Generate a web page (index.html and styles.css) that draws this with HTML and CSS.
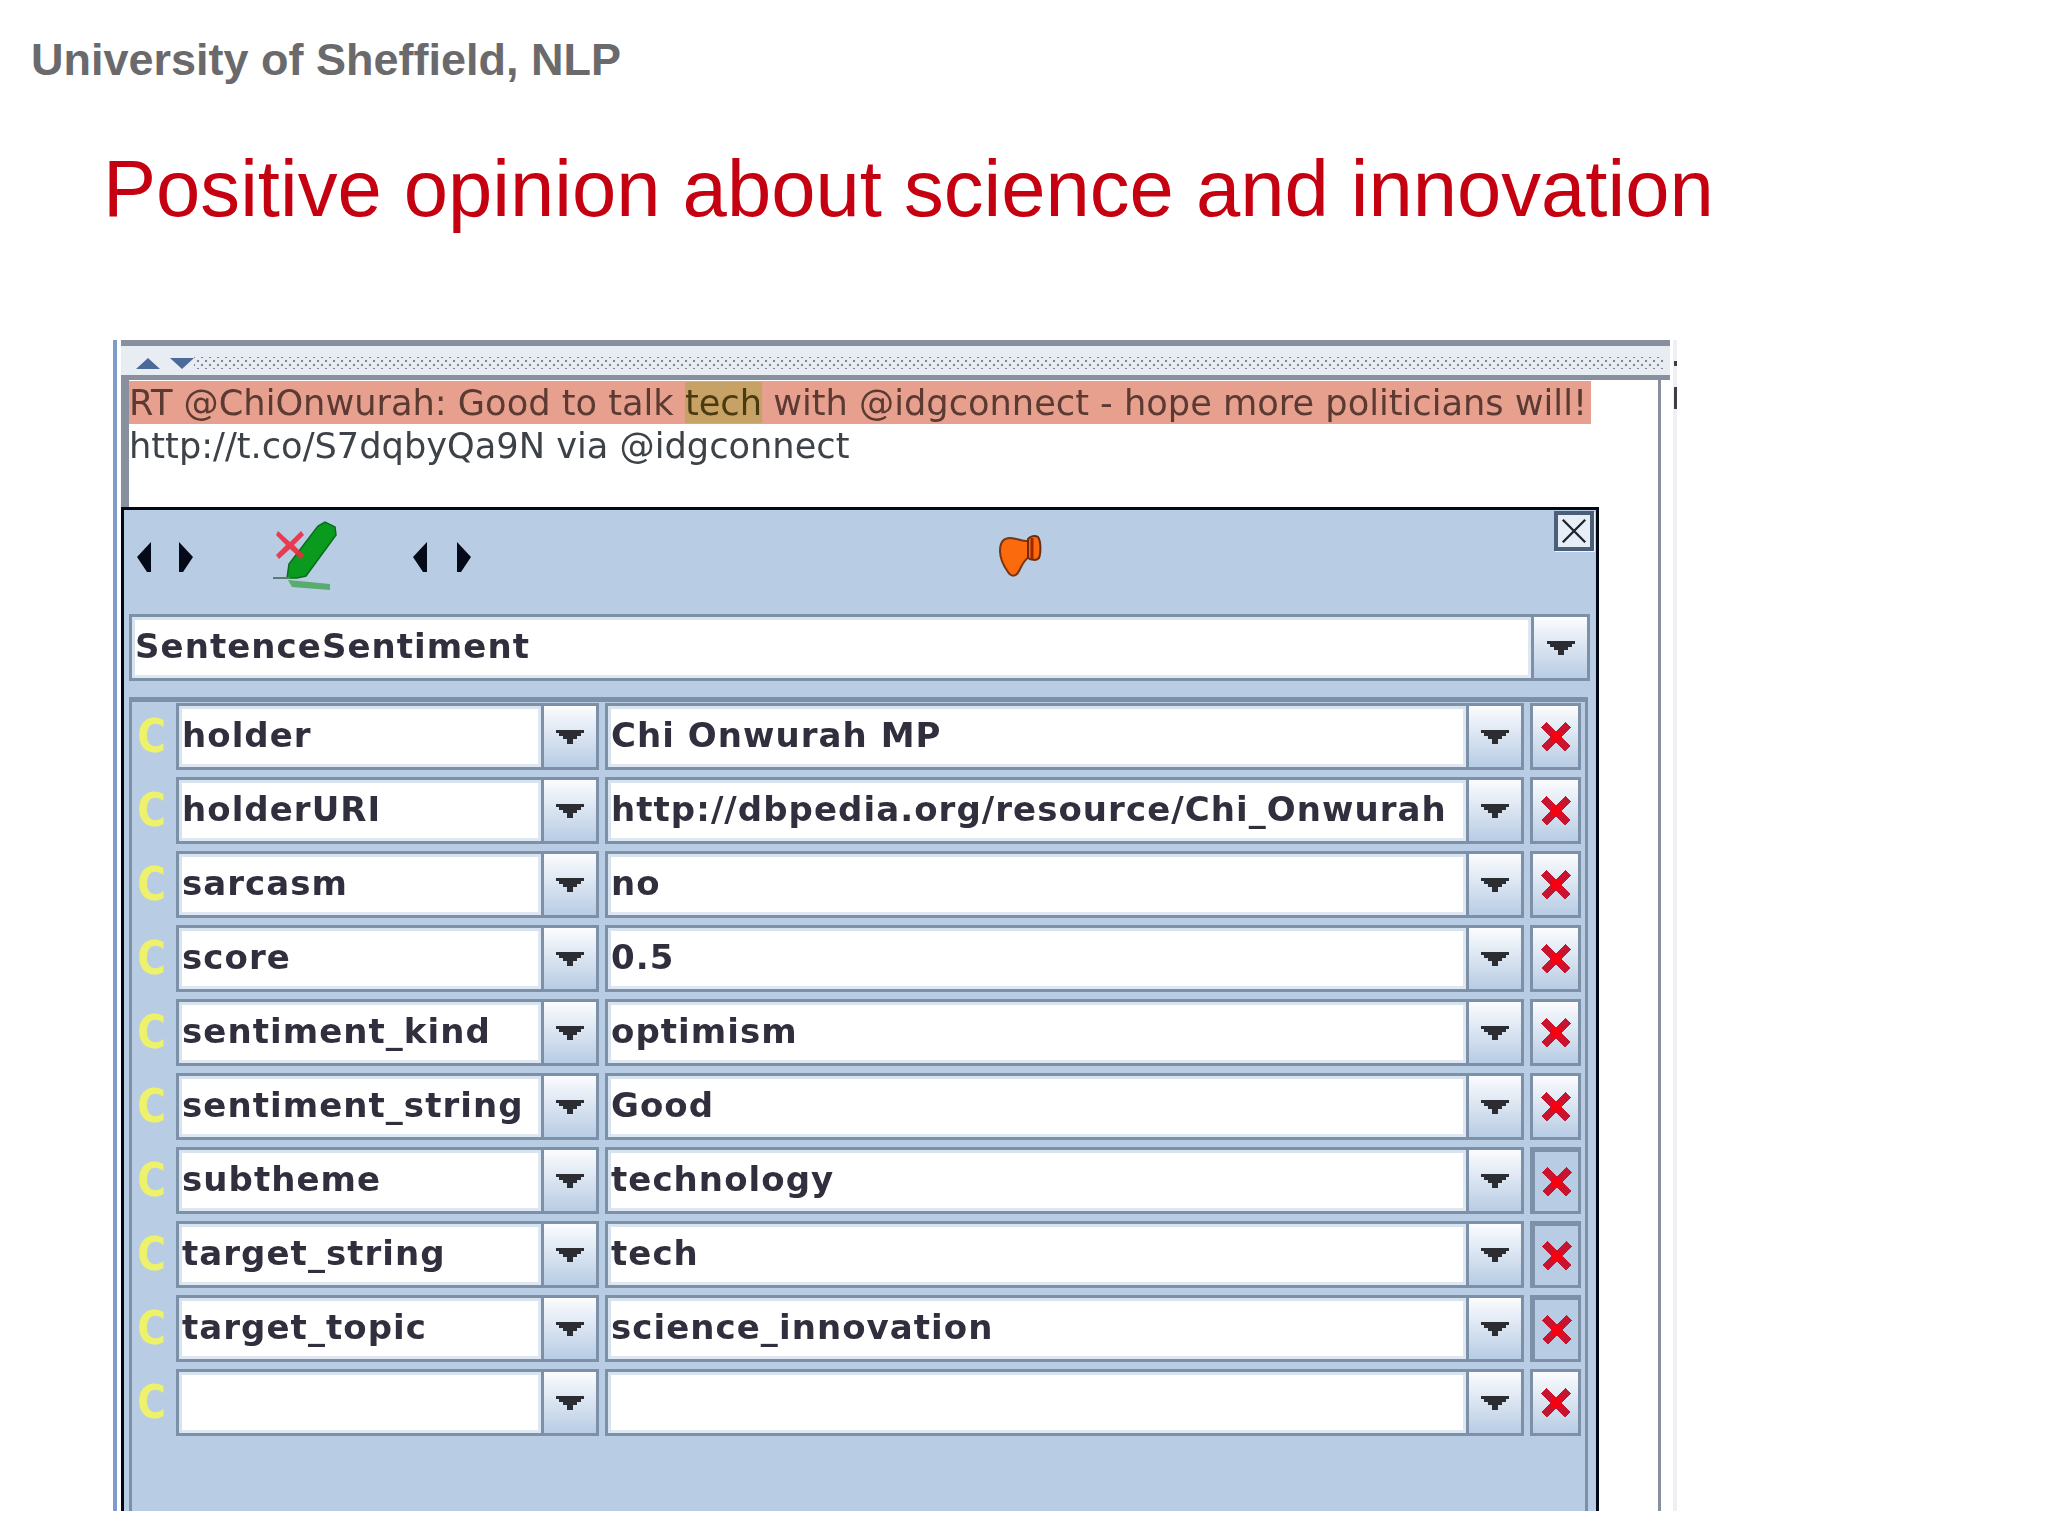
FILE: index.html
```html
<!DOCTYPE html>
<html lang="en">
<head>
<meta charset="utf-8">
<title>Positive opinion about science and innovation</title>
<link rel="stylesheet" href="styles.css">
</head>
<body>
<svg class="defs" width="0" height="0" aria-hidden="true">
  <symbol id="down" viewBox="0 0 28 14"><path d="M0 0H28V3H25V6H21V9H17V14H11V9H7V6H3V3H0Z" fill="#2b2d33"/></symbol>
  <symbol id="cross" viewBox="0 0 30 30"><path d="M3 3L27 27M27 3L3 27" stroke="#c8142e" stroke-width="7.5" fill="none" shape-rendering="crispEdges"/><rect x="10" y="10" width="10" height="10" fill="#f90010"/></symbol>
  <symbol id="left" viewBox="0 0 14 30"><path d="M14 0V30L10 30L0 15Z" fill="#050a18"/></symbol>
  <symbol id="right" viewBox="0 0 14 30"><path d="M0 0V30L4 30L14 15Z" fill="#050a18"/></symbol>
</svg>
<header class="slide-head">
  <p class="org">University of Sheffield, NLP</p>
  <h1 class="title">Positive opinion about science and innovation</h1>
</header>
<main class="window">
  <div class="splitter">
    <span class="tri tri-up"></span><span class="tri tri-down"></span><span class="dots"></span>
  </div>
  <div class="doc">
    <p class="tweet"><span class="hl">RT @ChiOnwurah: Good to talk <span class="hl-tech">tech</span> with @idgconnect - hope more politicians will!</span><br>http://t.co/S7dqbyQa9N via @idgconnect</p>
    <section class="panel">
      <div class="toolbar">
        <div class="arrows"><svg class="arrow"><use href="#left"/></svg><svg class="arrow"><use href="#right"/></svg></div>
        <svg class="marker" viewBox="0 0 70 70">
          <path d="M17 58L19 44L48 6L55 2L65 7L66 15L36 56L27 58Z" fill="#0a9a1e" stroke="#0b6d1a" stroke-width="1.5"/>
          <path d="M18 60L60 64V70L22 67Z" fill="#4da861" opacity=".9"/>
          <path d="M3 58H20" stroke="#5c7a72" stroke-width="2"/>
          <path d="M8 11L20 22L31 11L34 15L24 25L34 35L31 39L20 29L9 39L6 35L16 25L6 15Z" fill="#ee2b3e" opacity=".9"/>
        </svg>
        <div class="arrows arrows-two"><svg class="arrow"><use href="#left"/></svg><svg class="arrow"><use href="#right"/></svg></div>
        <svg class="speaker" viewBox="0 0 46 46">
          <path d="M3 18C3 9 7 5 13 5C20 5 26 9 31 8L32 24C27 27 25 32 22 38C19 44 14 44 11 39C6 32 3 26 3 18Z" fill="#fb6a0c" stroke="#7a3410" stroke-width="2"/>
          <path d="M31 6C33 3 38 2 41 4C44 8 44 20 42 25C39 28 34 27 31 25Z" fill="#fb6a0c" stroke="#6e2a0c" stroke-width="2"/>
          <path d="M35 5V26" stroke="#9c2800" stroke-width="3"/>
        </svg>
        <button class="close" type="button"><svg viewBox="0 0 30 30"><path d="M3 3L27 27M27 3L3 27" stroke="#1c2430" stroke-width="2.5"/></svg></button>
      </div>
      <div class="combo type-combo"><span class="field">SentenceSentiment</span><span class="drop"><svg><use href="#down"/></svg></span></div>
      <div class="rows">
        <div class="row"><span class="c">C</span><div class="combo name"><span class="field">holder</span><span class="drop"><svg><use href="#down"/></svg></span></div><div class="combo value"><span class="field">Chi Onwurah MP</span><span class="drop"><svg><use href="#down"/></svg></span></div><button class="del" type="button"><svg><use href="#cross"/></svg></button></div>
        <div class="row"><span class="c">C</span><div class="combo name"><span class="field">holderURI</span><span class="drop"><svg><use href="#down"/></svg></span></div><div class="combo value"><span class="field">http://dbpedia.org/resource/Chi_Onwurah</span><span class="drop"><svg><use href="#down"/></svg></span></div><button class="del" type="button"><svg><use href="#cross"/></svg></button></div>
        <div class="row"><span class="c">C</span><div class="combo name"><span class="field">sarcasm</span><span class="drop"><svg><use href="#down"/></svg></span></div><div class="combo value"><span class="field">no</span><span class="drop"><svg><use href="#down"/></svg></span></div><button class="del" type="button"><svg><use href="#cross"/></svg></button></div>
        <div class="row"><span class="c">C</span><div class="combo name"><span class="field">score</span><span class="drop"><svg><use href="#down"/></svg></span></div><div class="combo value"><span class="field">0.5</span><span class="drop"><svg><use href="#down"/></svg></span></div><button class="del" type="button"><svg><use href="#cross"/></svg></button></div>
        <div class="row"><span class="c">C</span><div class="combo name"><span class="field">sentiment_kind</span><span class="drop"><svg><use href="#down"/></svg></span></div><div class="combo value"><span class="field">optimism</span><span class="drop"><svg><use href="#down"/></svg></span></div><button class="del" type="button"><svg><use href="#cross"/></svg></button></div>
        <div class="row"><span class="c">C</span><div class="combo name"><span class="field">sentiment_string</span><span class="drop"><svg><use href="#down"/></svg></span></div><div class="combo value"><span class="field">Good</span><span class="drop"><svg><use href="#down"/></svg></span></div><button class="del" type="button"><svg><use href="#cross"/></svg></button></div>
        <div class="row"><span class="c">C</span><div class="combo name"><span class="field">subtheme</span><span class="drop"><svg><use href="#down"/></svg></span></div><div class="combo value"><span class="field">technology</span><span class="drop"><svg><use href="#down"/></svg></span></div><button class="del pressed" type="button"><svg><use href="#cross"/></svg></button></div>
        <div class="row"><span class="c">C</span><div class="combo name"><span class="field">target_string</span><span class="drop"><svg><use href="#down"/></svg></span></div><div class="combo value"><span class="field">tech</span><span class="drop"><svg><use href="#down"/></svg></span></div><button class="del pressed" type="button"><svg><use href="#cross"/></svg></button></div>
        <div class="row"><span class="c">C</span><div class="combo name"><span class="field">target_topic</span><span class="drop"><svg><use href="#down"/></svg></span></div><div class="combo value"><span class="field">science_innovation</span><span class="drop"><svg><use href="#down"/></svg></span></div><button class="del pressed" type="button"><svg><use href="#cross"/></svg></button></div>
        <div class="row"><span class="c">C</span><div class="combo name"><span class="field"></span><span class="drop"><svg><use href="#down"/></svg></span></div><div class="combo value"><span class="field"></span><span class="drop"><svg><use href="#down"/></svg></span></div><button class="del" type="button"><svg><use href="#cross"/></svg></button></div>
      </div>
    </section>
  </div>
</main>
</body>
</html>
```

FILE: styles.css
```css
* { box-sizing: border-box; }
html, body { margin: 0; padding: 0; }
body {
  width: 2048px;
  height: 1536px;
  overflow: hidden;
  background: #fff;
  font-family: "Liberation Sans", Arial, sans-serif;
}
.defs { display: block; height: 0; }
.slide-head { height: 340px; padding: 36px 0 0 31px; }
.org {
  margin: 0;
  font-size: 45px;
  line-height: 48px;
  font-weight: 700;
  color: #6a6a6c;
}
.title {
  margin: 60px 0 0 72px;
  font-size: 79.6px;
  line-height: 90px;
  font-weight: 400;
  color: #c50010;
}

.window {
  position: relative;
  margin-left: 113px;
  width: 1564px;
  height: 1171px;
  overflow: hidden;
  display: flex;
  flex-direction: column;
  border-left: 4px solid #7d9bcb;
  background: linear-gradient(#eef0f4, #eef0f4) right top / 4px 100% no-repeat;
  filter: blur(.6px);
}
.window::before,
.window::after {
  content: "";
  position: absolute;
  right: 0;
  width: 3px;
  background: #3c3f46;
}
.window::before { top: 21px; height: 5px; }
.window::after { top: 47px; height: 22px; }
.splitter {
  height: 40px;
  margin-left: 4px;
  margin-right: 7px;
  padding: 5px 6px 0 15px;
  display: flex;
  align-items: center;
  background: #e8edf4;
  border-top: 6px solid #87909c;
  border-bottom: 5px solid #87909c;
}
.tri { width: 0; height: 0; border-left: 12px solid transparent; border-right: 12px solid transparent; margin-right: 10px; }
.tri-up { border-bottom: 11px solid #4b6a99; }
.tri-down { border-top: 11px solid #4b6a99; margin-right: 0; }
.dots {
  flex: 1;
  height: 12px;
  background-image:
    radial-gradient(circle, #7f8894 1.1px, transparent 1.6px),
    radial-gradient(circle, #7f8894 1.1px, transparent 1.6px);
  background-size: 8px 8px;
  background-position: 0 0, 4px 4px;
}
.doc {
  flex: 1;
  min-height: 0;
  margin-left: 4px;
  margin-right: 16px;
  border-left: 8px solid #87909c;
  border-right: 3px solid #87909c;
}
.tweet {
  margin: 0;
  padding-top: 1px;
  height: 127px;
  font-family: "DejaVu Sans", sans-serif;
  font-size: 35.2px;
  line-height: 43px;
  color: #3d4248;
  white-space: nowrap;
}
.hl { background: #e8a08e; color: #5a3a32; display: inline-block; width: 1462px; }
.hl-tech { background: #c6a266; color: #4a3a10; }

.panel {
  margin-left: -8px;
  width: 1478px;
  height: 1100px;
  background: #b8cce4;
  border: 3px solid #000814;
  border-bottom: 0;
  padding: 0 6px 0 5px;
}
.toolbar { height: 104px; display: flex; position: relative; padding-left: 8px; align-items: flex-start; }
.arrows { display: flex; gap: 28px; margin-top: 32px; }
.arrow { width: 14px; height: 30px; display: block; }
.marker { width: 70px; height: 70px; margin: 10px 0 0 77px; }
.arrows-two { margin-left: 73px; gap: 30px; }
.speaker { width: 46px; height: 46px; margin: 23px 0 0 526px; }
.close {
  position: absolute;
  top: 1px;
  right: -4px;
  width: 40px;
  height: 40px;
  padding: 2px;
  background: #e8eef6;
  border: 4px solid #4c5f78;
  box-shadow: 1px 1px 0 #eef3fa;
}
.close svg { display: block; width: 100%; height: 100%; }

.combo { display: flex; height: 67px; border: 3px solid #7c90a8; background: #fff; }
.field {
  flex: 1;
  min-width: 0;
  padding-left: 3px;
  font-family: "DejaVu Sans", sans-serif;
  font-weight: 700;
  font-size: 34px;
  letter-spacing: 1.05px;
  line-height: 58px;
  color: #312f3d;
  white-space: nowrap;
  overflow: hidden;
  box-shadow: inset 3px 3px 0 #d8e3f0, inset -3px -3px 0 #dfe8f2;
}
.drop {
  width: 55px;
  border-left: 3px solid #7c90a8;
  background: linear-gradient(#fbfcfe, #b8cce4);
  display: flex;
  align-items: center;
  justify-content: center;
}
.drop svg { width: 28px; height: 14px; display: block; }
.type-combo { width: 1461px; }
.type-combo .drop { width: 56px; }

.rows {
  margin-top: 16px;
  border-top: 5px solid #7c90a8;
  border-left: 3px solid #7c90a8;
  padding-top: 1px;
  display: flex;
  flex-direction: column;
  gap: 7px;
  width: 1459px;
  height: 900px;
  border-right: 3px solid #7c90a8;
}
.row { display: grid; grid-template-columns: 35px 423px 919px 51px; column-gap: 6px; height: 67px; align-items: stretch; padding-left: 3px; }
.c {
  font-family: "DejaVu Sans", sans-serif;
  font-weight: 700;
  font-size: 46px;
  line-height: 67px;
  text-align: center;
  color: #eef26a;
  margin-right: 4px;
  transform: scaleX(.85);
}
.del {
  padding: 0;
  border: 3px solid #7c90a8;
  background: linear-gradient(#fbfcfe, #b8cce4);
  display: flex;
  align-items: center;
  justify-content: center;
}
.del svg { width: 30px; height: 30px; display: block; }
.del.pressed { background: #b8cce4; border-top-width: 5px; border-left-width: 5px; }
```
